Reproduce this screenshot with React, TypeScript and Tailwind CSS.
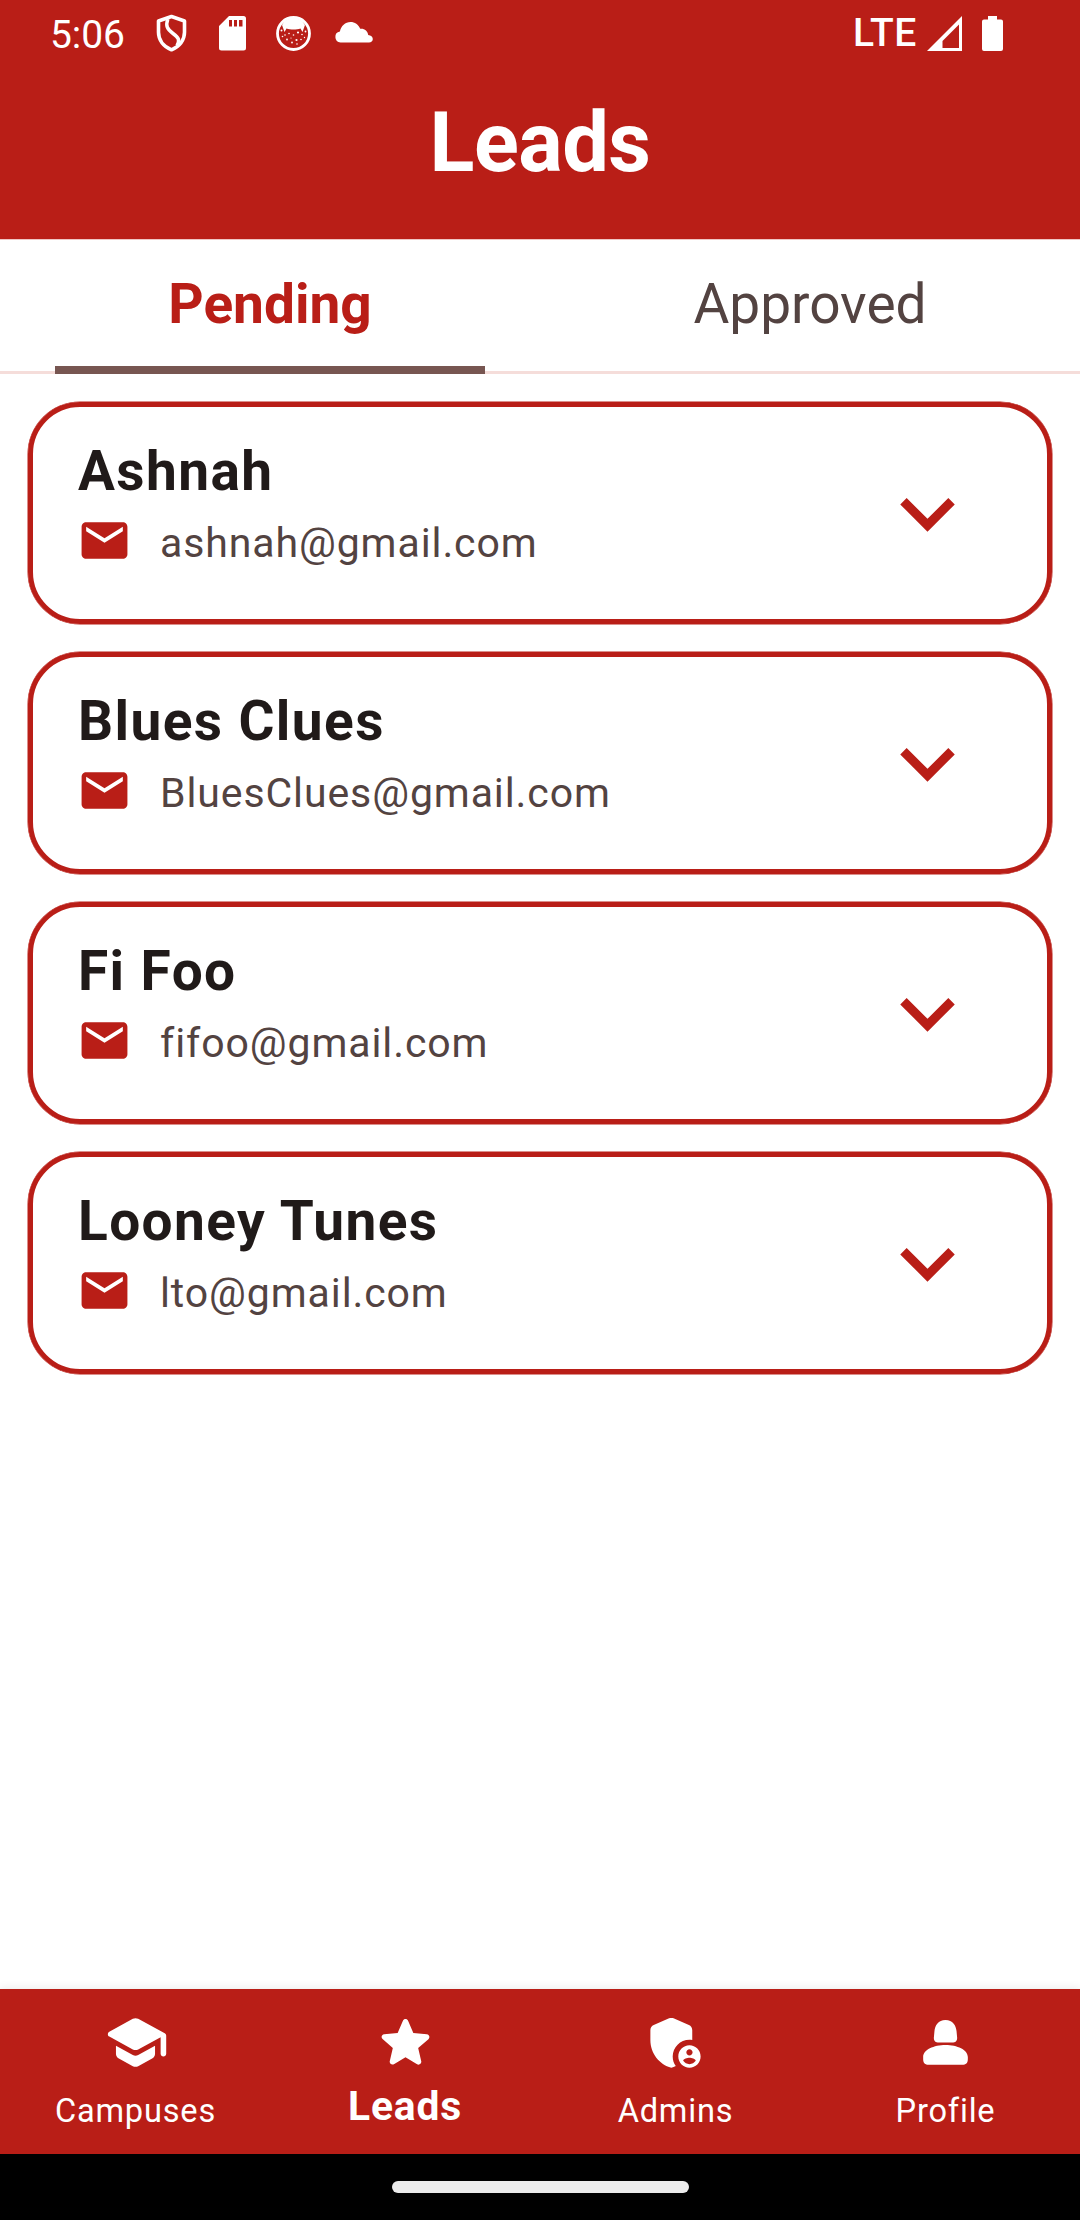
import React from "react";

const leads = [
  { name: "Ashnah", email: "ashnah@gmail.com" },
  { name: "Blues Clues", email: "BluesClues@gmail.com" },
  { name: "Fi Foo", email: "fifoo@gmail.com" },
  { name: "Looney Tunes", email: "lto@gmail.com" },
];

function ShieldIcon() {
  return (
    <svg className="h-[38px] w-[32px]" viewBox="0 0 32 38" fill="none" stroke="white">
      <path d="M15.500 2.500 28.500 7v11.200c0 8-5.200 14.400-13 17.600C7.700 32.600 2.500 26.200 2.500 18.200V7Z" strokeWidth="3.600" strokeLinejoin="round" />
      <path d="M11.800 5C9.500 12 11 15 17 19.500S24 26 21 31.500" strokeWidth="3.500" />
    </svg>
  );
}

function SdCardIcon() {
  return (
    <svg className="h-[35px] w-[27px]" viewBox="0 0 27 35" fill="white">
      <path fillRule="evenodd" d="M10 0h14.500A2.500 2.500 0 0 1 27 2.500v29.500a2.500 2.500 0 0 1-2.500 2.500h-22A2.500 2.500 0 0 1 0 32V10Zm0 4v6.500h3V4Zm5 0v6.500h3V4Zm5 0v6.500h3.500V4Z" />
    </svg>
  );
}

function FaceIcon() {
  return (
    <svg className="size-[35px]" viewBox="0 0 35 35">
      <circle cx="17.500" cy="17.500" r="16" fill="none" stroke="white" strokeWidth="2.800" />
      <path fill="white" d="M6 9C9 4 13 2 17.500 2S26 4 29 9l-2.500 7-2-3.500c-4 1.300-10 1.300-14 0L8.500 16Z" />
      <g fill="white">
        <circle cx="5.500" cy="14.500" r="1" /><circle cx="9" cy="19" r=".8" /><circle cx="13" cy="17.500" r=".8" />
        <circle cx="17.500" cy="19" r=".8" /><circle cx="22" cy="16.500" r="1.100" /><circle cx="26" cy="18.500" r=".8" />
        <circle cx="6.500" cy="20.500" r=".8" /><circle cx="11" cy="23.500" r=".9" /><circle cx="16" cy="26.500" r=".9" />
        <circle cx="20.500" cy="24" r="1.100" /><circle cx="25" cy="23.500" r=".8" /><circle cx="15" cy="22" r=".6" />
        <circle cx="21" cy="28" r=".8" /><circle cx="29.500" cy="15.500" r=".9" /><circle cx="28.500" cy="21.500" r=".7" />
      </g>
    </svg>
  );
}

function CloudIcon() {
  return (
    <svg className="h-[21px] w-[38px]" viewBox="0 0 38 21" fill="white">
      <path d="M5.500 20.500a5.500 5.500 0 0 1-.6-10.900C6 4 10.200 0 15.500 0c4.300 0 8 2.700 9.700 6.800 4-.6 7.600 2.200 8 6.200 2.700.3 4.600 1.800 4.600 4 0 2-1.600 3.500-3.800 3.500Z" />
    </svg>
  );
}

function StatusBar() {
  return (
    <div className="flex h-[66px] items-center pl-[50px] pr-[77px] text-white">
      <span className="mt-[5px] w-[106px] text-[39px] leading-none tracking-[-0.1px]">5:06</span>
      <ShieldIcon />
      <span className="ml-[31px]"><SdCardIcon /></span>
      <span className="ml-[30px]"><FaceIcon /></span>
      <span className="ml-[24px] -mt-[2px]"><CloudIcon /></span>
      <span className="ml-auto text-[39px] font-medium leading-none tracking-[0.6px]">LTE</span>
      <svg className="ml-[10px] h-[35px] w-[35px]" viewBox="0 0 35 35" fill="white">
        <path fillRule="evenodd" d="M35 0v35H0ZM32 8.500 15.500 25v7H32Z" />
      </svg>
      <svg className="ml-[20px] h-[35px] w-[21px]" viewBox="0 0 21 35" fill="white">
        <path d="M6 0h9v3.500h4A2 2 0 0 1 21 5.500V33a2 2 0 0 1-2 2H2a2 2 0 0 1-2-2V5.500a2 2 0 0 1 2-2h4Z" />
      </svg>
    </div>
  );
}

function Tabs() {
  return (
    <div className="relative grid h-[134px] grid-cols-2 border-b-[3px] border-[#f5ddda] text-center text-[55px] leading-[128px]">
      <div className="font-bold text-[#b91e17]">Pending</div>
      <div className="text-[#534341]">Approved</div>
      <div className="absolute -bottom-[3px] left-[55px] h-[8px] w-[430px] bg-[#775651]" />
    </div>
  );
}

function LeadCard({ name, email }: { name: string; email: string }) {
  return (
    <div className="flex h-[222px] items-center justify-between rounded-[52px] border-[5px] border-[#b91e17] pl-[44px] pr-[65px] shadow-[0_0_0_0.5px_#b91e17]">
      <div className="self-start pt-[32px]">
        <div className="pl-[1px] text-[55px] font-bold leading-[64px] tracking-[1.4px] text-[#201a19]">{name}</div>
        <div className="mt-[10px] flex h-[55px] items-center">
          <svg className="size-[55px]" viewBox="0 0 24 24" fill="#b91e17">
            <path d="M20 4H4c-1.100 0-1.990.9-1.990 2L2 18c0 1.100.9 2 2 2h16c1.100 0 2-.9 2-2V6c0-1.100-.9-2-2-2zm0 4l-8 5-8-5V6l8 5 8-5v2z" />
          </svg>
          <span className="ml-[28px] mt-[5px] text-[41px] leading-[48px] tracking-[0.9px] text-[#534341]">{email}</span>
        </div>
      </div>
      <svg className="size-[109px] shrink-0" viewBox="0 0 24 24" fill="#b91e17">
        <path d="M16.590 8.590 12 13.170 7.410 8.590 6 10l6 6 6-6z" />
      </svg>
    </div>
  );
}

const navItems = [
  {
    label: "Campuses",
    paths: [
      "M5 13.180v2.810c0 .73.4 1.410 1.040 1.760l5 2.730c.6.33 1.320.33 1.920 0l5-2.730c.64-.35 1.040-1.030 1.040-1.760v-2.810l-6.040 3.300c-.6.33-1.320.33-1.920 0L5 13.180z",
      "M11.040 3.520l-8.430 4.600c-.69.38-.69 1.380 0 1.760l8.430 4.600c.6.33 1.320.33 1.920 0L21 10.090V16c0 .55.45 1 1 1s1-.45 1-1V9.590c0-.37-.2-.7-.52-.88l-9.520-5.190c-.6-.32-1.320-.32-1.920 0z",
    ],
  },
  {
    label: "Leads",
    active: true,
    paths: [
      "M12 17.270l4.150 2.510c.76.46 1.690-.22 1.490-1.080l-1.100-4.720 3.670-3.180c.67-.58.31-1.680-.57-1.750l-4.830-.41-1.890-4.460c-.34-.81-1.500-.81-1.840 0L9.190 8.630l-4.830.41c-.88.07-1.240 1.170-.57 1.750l3.670 3.180-1.100 4.720c-.2.86.73 1.540 1.490 1.080l4.150-2.500z",
    ],
  },
  {
    label: "Admins",
    paths: [
      "M17 11c.34 0 .67.04 1 .09V7.580c0-.8-.47-1.520-1.200-1.830l-5.500-2.400c-.51-.22-1.090-.22-1.600 0l-5.500 2.400C3.470 6.070 3 6.790 3 7.580v3.600c0 4.540 3.200 8.790 7.500 9.820.55-.13 1.080-.32 1.600-.55-.69-.98-1.100-2.170-1.100-3.450 0-3.310 2.690-6 6-6z",
      "M17 13c-2.210 0-4 1.790-4 4s1.790 4 4 4 4-1.790 4-4-1.790-4-4-4zm0 1.380c.62 0 1.120.51 1.120 1.120s-.51 1.120-1.120 1.120-1.120-.51-1.120-1.120.5-1.120 1.120-1.120zm0 5.370c-.93 0-1.740-.46-2.240-1.170.05-.72 1.510-1.080 2.240-1.080s2.190.36 2.240 1.080c-.5.71-1.310 1.170-2.240 1.170z",
    ],
  },
  {
    label: "Profile",
    paths: [
      "M12 3.900c2.600 0 3.750 1.900 3.950 4l.2 2.100c.15 1.500-.5 2-1.750 2H9.600c-1.250 0-1.900-.5-1.750-2l.2-2.100c.2-2.100 1.350-4 3.950-4z",
      "M12 12.900c4.200 0 8 1.700 8 4.300v.8c0 1.400-.7 2-2 2H6c-1.300 0-2-.6-2-2v-.8c0-2.600 3.800-4.300 8-4.300z",
    ],
  },
];

function BottomNav() {
  return (
    <nav className="grid h-[165px] grid-cols-4 bg-[#b91e17] text-white shadow-[0_0_9px_rgba(0,0,0,0.1)]">
      {navItems.map((item) => (
        <div key={item.label} className="flex flex-col items-center pt-[20px]">
          <svg className="size-[67px] shrink-0" viewBox="0 0 24 24" fill="white">
            {item.paths.map((d) => <path key={d} d={d} />)}
          </svg>
          {item.active ? (
            <span className="mt-[5px] text-[40.8px] font-bold leading-[50px] tracking-[0.8px]">{item.label}</span>
          ) : (
            <span className="mt-[10px] pl-[1px] text-[32.6px] leading-[50px] tracking-[0.8px]">{item.label}</span>
          )}
        </div>
      ))}
    </nav>
  );
}

export default function App() {
  return (
    <div className="flex h-[2220px] w-[1080px] flex-col bg-white font-[Roboto,sans-serif]">
      <header className="h-[240px] border-b border-[#efc6c4] bg-[#b91e17]">
        <StatusBar />
        <h1 className="text-center text-[83px] font-bold leading-[153px] tracking-[-0.5px] text-white">Leads</h1>
      </header>
      <Tabs />
      <main className="flex grow flex-col gap-[28px] px-[28px] pt-[28px]">
        {leads.map((lead) => <LeadCard key={lead.name} {...lead} />)}
      </main>
      <BottomNav />
      <footer className="flex h-[66px] items-center justify-center bg-black">
        <div className="h-[12px] w-[297px] rounded-full bg-[#ececec]" />
      </footer>
    </div>
  );
}
